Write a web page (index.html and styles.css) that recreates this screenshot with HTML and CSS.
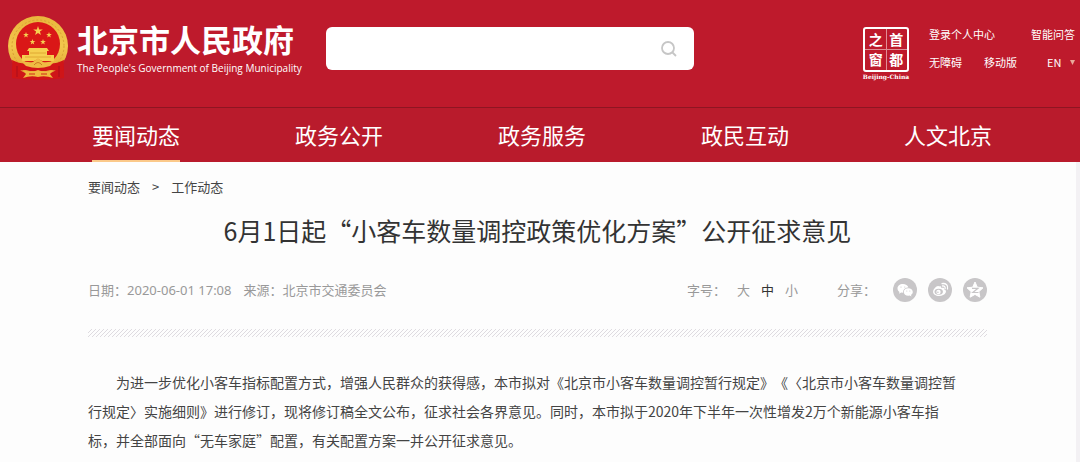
FILE: index.html
```html
<!DOCTYPE html>
<html lang="zh-CN">
<head>
<meta charset="utf-8">
<title>北京市人民政府</title>
<link rel="stylesheet" href="styles.css">
</head>
<body>
<header class="header">
  <div class="brand">
    <svg class="emblem" viewBox="0 0 60 64" aria-hidden="true">
      <defs>
        <linearGradient id="gold" x1="0" y1="0" x2="0" y2="1">
          <stop offset="0" stop-color="#e9b63c"/>
          <stop offset=".5" stop-color="#f3c64c"/>
          <stop offset="1" stop-color="#dfa233"/>
        </linearGradient>
        <path id="star" d="M0-5 1.2-1.6 4.8-1.5 1.9.6 2.9 4 0 2-2.9 4-1.9.6-4.8-1.5-1.2-1.6z"/>
      </defs>
      <path d="M6 42 4 52v10l9 1 17 1 17-1 9-1V52l-2-10z" fill="#cf1518"/>
      <circle cx="30" cy="30" r="30" fill="url(#gold)"/>
      <circle cx="30" cy="30" r="26" fill="none" stroke="#d9a032" stroke-width="1" stroke-dasharray="2 2"/>
      <circle cx="30" cy="28" r="22" fill="#da1717"/>
      <g fill="#f6cf50">
        <use href="#star" transform="translate(30 15)"/>
        <use href="#star" transform="translate(18 19) scale(.6)"/>
        <use href="#star" transform="translate(41 19) scale(.6)"/>
        <use href="#star" transform="translate(24.500 26) scale(.6)"/>
        <use href="#star" transform="translate(35 26) scale(.6)"/>
        <path d="M21 32h18l2 3H19zM21 35h18v4h7v6H14v-6h7z"/>
      </g>
      <path d="M17 41h26M22 37h16" stroke="#e0a833" stroke-width="1"/>
      <path d="M4 44q10 5 18 3l8-4 8 4q8 2 18-3l-1 11-13-1-4 1H22l-4-1-13 1z" fill="#d11517"/>
      <path d="M12 44q8 3 13 2l5-4 5 4q5 1 13-2l-6 6q-12 4-24 0z" fill="#efbb43"/>
      <path d="M26 49q4-5 8 0" fill="none" stroke="#cc7c22"/>
      <path d="M15 54q8 3 15 0 7 3 15 0l-3 4 3 4q-8-3-15-1-7-2-15 1l3-4z" fill="#f0b93e"/>
      <path d="M21 58h6M33 58h6" stroke="#cf2818"/>
      <path d="M9 50v11M51 50v11" stroke="#a90f1c" stroke-width="1"/>
    </svg>
    <div class="brand-text">
      <div class="brand-name">北京市人民政府</div>
      <div class="brand-en">The People's Government of Beijing Municipality</div>
    </div>
  </div>
  <form class="search">
    <input class="search-input" type="text" aria-label="搜索">
    <button class="search-button" type="button" aria-label="搜索">
      <svg viewBox="0 0 18 18" width="18" height="18" fill="none" stroke="#c6c6c6" stroke-width="1.800"><circle cx="8" cy="8" r="6"/><path d="m12.500 12.500 3.500 3.500"/></svg>
    </button>
  </form>
  <div class="tools">
    <a class="seal" href="#">
      <span class="seal-grid"><span>之</span><span>首</span><span>窗</span><span>都</span></span>
      <span class="seal-caption">Beijing-China</span>
    </a>
    <div class="links">
      <div class="links-row"><a href="#">登录个人中心</a><a href="#">智能问答</a></div>
      <div class="links-row">
        <span class="links-group"><a href="#">无障碍</a><a href="#">移动版</a></span>
        <label class="lang"><select class="lang-select" aria-label="语言"><option>EN</option></select><svg viewBox="0 0 5 5" width="5" height="5"><path d="M0 0h5L2.500 5z" fill="#e9a99a"/></svg></label>
      </div>
    </div>
  </div>
</header>
<nav class="nav">
  <a class="nav-item nav-item-active" href="#">要闻动态</a>
  <a class="nav-item" href="#">政务公开</a>
  <a class="nav-item" href="#">政务服务</a>
  <a class="nav-item" href="#">政民互动</a>
  <a class="nav-item" href="#">人文北京</a>
</nav>
<main class="main">
  <div class="crumbs"><a href="#">要闻动态</a><span>&gt;</span><a href="#">工作动态</a></div>
  <h1 class="title">6月1日起“小客车数量调控政策优化方案”公开征求意见</h1>
  <div class="meta">
    <span>日期：<span class="date">2020-06-01 17:08</span></span>
    <span>来源：北京市交通委员会</span>
    <div class="sizes">
      <span class="sizes-label">字号：</span>
      <button class="size" type="button">大</button>
      <button class="size size-current" type="button">中</button>
      <button class="size" type="button">小</button>
    </div>
    <div class="share">
      <span class="share-label">分享：</span>
      <a href="#" aria-label="微信"><svg viewBox="0 0 24 24"><circle cx="12" cy="12" r="12" fill="#c8c6c8"/><path d="M10 6c-3.300 0-5.500 2-5.500 4.400 0 1.500.8 2.700 2 3.500L6 15.800l2.200-1.200 2 .2C9.700 11.800 12 9.300 15.400 9.400 14.800 7.400 12.600 6 10 6z" fill="#fff"/><path d="M15.300 10.200c-2.800 0-4.500 1.700-4.500 3.800s1.800 3.700 4.500 3.700l1.300-.2 1.900 1-.5-1.600c1.100-.7 1.800-1.700 1.800-2.900 0-2.100-2-3.800-4.500-3.800z" fill="#fff"/><g fill="#c8c6c8"><circle cx="8" cy="9" r=".6"/><circle cx="11.800" cy="9" r=".6"/><circle cx="13.800" cy="13" r=".5"/><circle cx="16.800" cy="13" r=".5"/></g></svg></a>
      <a href="#" aria-label="微博"><svg viewBox="0 0 24 24"><circle cx="12" cy="12" r="12" fill="#c8c6c8"/><path d="M11 8.500c1.400-.5 2.600 0 2.200 1.500 2-.8 3.500-.2 2.900 1.300 4 1.300 1.400 6.700-5 6.700-3.500 0-6-1.600-6-4.200C5.100 10.800 9.600 6.500 11 8.500z" fill="#fff"/><ellipse cx="10.700" cy="13.800" rx="4.200" ry="3" fill="#c8c6c8"/><circle cx="10.500" cy="14" r="2.200" fill="#fff"/><circle cx="9.900" cy="14.300" r=".8" fill="#c8c6c8"/><path d="M14 5.600c4-.7 6.500 2 5.500 5.400M14.500 8c2-.2 3 .9 2.600 2.600" fill="none" stroke="#fff" stroke-width="1.300" stroke-linecap="round"/></svg></a>
      <a href="#" aria-label="QQ空间"><svg viewBox="0 0 24 24"><circle cx="12" cy="12" r="12" fill="#c8c6c8"/><path d="m12 4 2.300 5.200 5.700.6-4.200 3.900 1.100 5.500L12 16.400l-4.900 2.800 1.100-5.500L4 9.800l5.700-.6z" fill="#fff" stroke="#fff" stroke-linejoin="round"/><path d="M9 10.300h6L9.800 14.500h5.700" fill="none" stroke="#c8c6c8" stroke-width="1.200"/></svg></a>
    </div>
  </div>
  <div class="stripes"></div>
  <p class="text">为进一步优化小客车指标配置方式，增强人民群众的获得感，本市拟对《北京市小客车数量调控暂行规定》《〈北京市小客车数量调控暂<br>行规定〉实施细则》进行修订，现将修订稿全文公布，征求社会各界意见。同时，本市拟于2020年下半年一次性增发2万个新能源小客车指<br>标，并全部面向“无车家庭”配置，有关配置方案一并公开征求意见。</p>
</main>
</body>
</html>
```
FILE: styles.css
```css
* { box-sizing: border-box; }
body {
  margin: 0;
  background: #fdfdfd;
  color: #444;
  font-family: "Noto Sans CJK SC", sans-serif;
  text-spacing-trim: space-all;
}
a { color: inherit; text-decoration: none; }
button { padding: 0; border: 0; background: none; color: inherit; font: inherit; }
svg { display: block; }

.header {
  display: flex;
  align-items: flex-start;
  padding: 16px 5px 0 8px;
  height: 107px;
  background: #be1a2c;
  color: #fff;
}
.brand { display: flex; gap: 9px; width: 318px; flex: none; }
.emblem { width: 60px; height: 64px; }
.brand-text { padding-top: 4px; white-space: nowrap; }
.brand-name { font-size: 31px; font-weight: 700; line-height: 38px; }
.brand-en { font: 10px/20px "Open Sans", sans-serif; }

.search {
  display: flex;
  align-items: center;
  flex: 0 1 368px;
  height: 43px;
  margin-top: 11px;
  padding-right: 16px;
  border-radius: 6px;
  background: #fff;
}
.search-input { flex: 1; min-width: 0; height: 100%; padding: 0 16px; border: 0; outline: 0; background: none; font-size: 14px; }

.tools { display: flex; gap: 18px; margin-left: auto; padding-top: 10px; }
.seal { display: flex; flex-direction: column; align-items: center; width: 50px; padding-top: 1px; }
.seal-grid {
  display: grid;
  grid-template-columns: 1fr 1fr;
  gap: 1px;
  width: 46px;
  padding: 1px;
  border: 2px solid #fff;
  border-radius: 3px;
  background: linear-gradient(#e08e96, #e08e96) center / 1px 100% no-repeat, linear-gradient(#e08e96, #e08e96) center / 100% 1px no-repeat;
  font-size: 14px;
  font-weight: 700;
  line-height: 19px;
  text-align: center;
}
.seal-caption { font: 700 6px/9px "DejaVu Serif", serif; white-space: nowrap; }
.links { display: flex; flex-direction: column; gap: 12px; width: 146px; font-size: 11px; line-height: 16px; }
.links-row { display: flex; justify-content: space-between; }
.links-group { display: flex; gap: 22px; }
.lang { display: flex; align-items: center; gap: 8px; }
.lang-select { appearance: none; padding: 0; border: 0; background: none; color: #fff; font: inherit; }

.nav {
  display: flex;
  justify-content: space-between;
  padding: 0 88px 0 92px;
  border-top: 1px solid #8e1522;
  background: #b91b2c;
  color: #fff;
}
.nav-item { border-bottom: 2px solid transparent; font-size: 22px; line-height: 52px; }
.nav-item-active { border-color: #fbc98a; }

.main { padding: 16px 89px 10px 88px; border-right: 4px solid #f3f1f4; }
.crumbs { display: flex; gap: 12px; font-size: 13px; line-height: 18px; }
.title { margin: 14px 0 0; color: #333; font-size: 25px; font-weight: 400; line-height: 40px; text-align: center; }
.meta { display: flex; align-items: center; gap: 12px; margin-top: 28px; color: #999; font-size: 13px; line-height: 24px; }
.date { font-family: "Noto Sans", sans-serif; }
.sizes { display: flex; gap: 11px; margin-left: auto; }
.size-current { color: #333; }
.share { display: flex; gap: 11px; margin-left: 27px; }
.share-label { margin-right: 6px; }
.share svg { width: 24px; height: 24px; }
.stripes {
  height: 8px;
  margin-top: 27px;
  background: linear-gradient(135deg, #dedbe0 12%, transparent 12% 38%, #dedbe0 38% 62%, transparent 62% 88%, #dedbe0 88%) 0 0 / 4px 4px;
}
.text { margin: 31px 0 0; font-size: 14px; line-height: 29px; text-indent: 2em; white-space: nowrap; }
```
